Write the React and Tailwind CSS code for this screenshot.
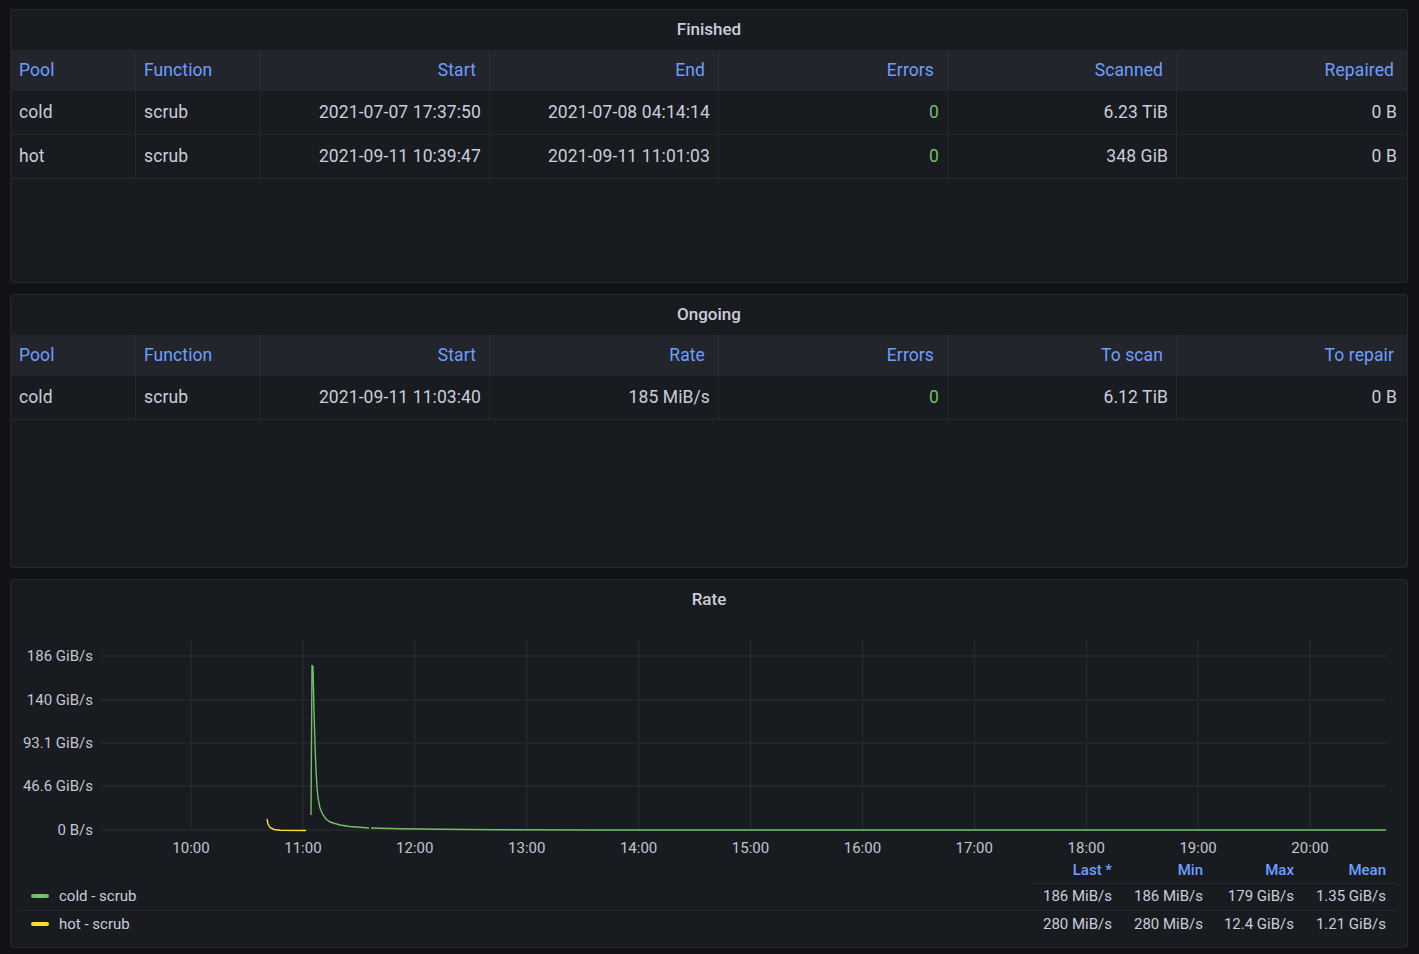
const finishedCols = [
  { label: 'Pool', w: 'w-[125px]', align: 'left' },
  { label: 'Function', w: 'w-[125px]', align: 'left' },
  { label: 'Start', w: 'w-[229px]', align: 'right' },
  { label: 'End', w: 'w-[229px]', align: 'right' },
  { label: 'Errors', w: 'w-[229px]', align: 'right' },
  { label: 'Scanned', w: 'w-[229px]', align: 'right' },
  { label: 'Repaired', w: 'w-[230px]', align: 'right' },
]

const ongoingCols = [
  { label: 'Pool', w: 'w-[125px]', align: 'left' },
  { label: 'Function', w: 'w-[125px]', align: 'left' },
  { label: 'Start', w: 'w-[229px]', align: 'right' },
  { label: 'Rate', w: 'w-[229px]', align: 'right' },
  { label: 'Errors', w: 'w-[229px]', align: 'right' },
  { label: 'To scan', w: 'w-[229px]', align: 'right' },
  { label: 'To repair', w: 'w-[230px]', align: 'right' },
]

const finishedRows = [
  ['cold', 'scrub', '2021-07-07 17:37:50', '2021-07-08 04:14:14', '0', '6.23 TiB', '0 B'],
  ['hot', 'scrub', '2021-09-11 10:39:47', '2021-09-11 11:01:03', '0', '348 GiB', '0 B'],
]

const ongoingRows = [['cold', 'scrub', '2021-09-11 11:03:40', '185 MiB/s', '0', '6.12 TiB', '0 B']]

function Panel({ title, className = '', children }) {
  return (
    <div className={`flex flex-col rounded-[3px] border border-[#25272c] bg-[#181b1f] ${className}`}>
      <div className="flex h-[40px] shrink-0 items-center justify-center text-[17px] font-medium text-[#ccccdc]">{title}</div>
      {children}
    </div>
  )
}

function Table({ cols, rows }) {
  return (
    <div className="flex flex-col">
      <div className="flex h-[41px] bg-[#22252b]">
        {cols.map((c, i) => (
          <div
            key={c.label}
            className={`${c.w} flex items-center border-[#2a2c31] text-[17.5px] tracking-[0.1px] text-[#6e9fff] ${i < cols.length - 1 ? 'border-r' : ''} ${c.align === 'right' ? 'justify-end pr-[13px]' : 'pl-2'}`}
          >
            {c.label}
          </div>
        ))}
      </div>
      {rows.map((r, ri) => (
        <div key={ri} className="flex h-[44px] border-b border-[#25272c]">
          {r.map((v, i) => (
            <div
              key={i}
              className={`${cols[i].w} flex items-center border-[#25272c] text-[17.5px] tracking-[0.1px] ${i === 4 ? 'text-[#73bf69]' : 'text-[#ccccdc]'} ${i < r.length - 1 ? 'border-r' : ''} ${cols[i].align === 'right' ? (i === r.length - 1 ? 'justify-end pr-[10px]' : 'justify-end pr-[8px]') : 'pl-2'}`}
            >
              {v}
            </div>
          ))}
        </div>
      ))}
    </div>
  )
}

const yTicks = [
  [656, '186 GiB/s'],
  [700, '140 GiB/s'],
  [743, '93.1 GiB/s'],
  [786, '46.6 GiB/s'],
  [830, '0 B/s'],
]

const xTicks = ['10:00', '11:00', '12:00', '13:00', '14:00', '15:00', '16:00', '17:00', '18:00', '19:00', '20:00']

function Chart() {
  return (
    <svg className="block shrink-0" width="1396" height="237" viewBox="11 620 1396 237">
      {yTicks.map(([y]) => (
        <line key={y} x1="100" x2="1386" y1={y} y2={y} stroke="#2c2e33" strokeWidth="1" />
      ))}
      {xTicks.map((t, i) => {
        const x = 191 + i * 111.9
        return <line key={t} x1={x} x2={x} y1="640" y2="830" stroke="#2c2e33" strokeWidth="1" />
      })}
      {yTicks.map(([y, label]) => (
        <text key={label} x="93" y={y + 5} textAnchor="end" fontSize="15" fill="#c4c4d2" fontFamily="Roboto, sans-serif">
          {label}
        </text>
      ))}
      {xTicks.map((t, i) => (
        <text key={t} x={191 + i * 111.9} y="853" textAnchor="middle" fontSize="15" fill="#c4c4d2" fontFamily="Roboto, sans-serif">
          {t}
        </text>
      ))}
      <path
        d="M267,819 L268,824 L270,827.5 L274,829.5 L280,830.2 L306,830.5"
        fill="none"
        stroke="#fade2a"
        strokeWidth="1.4"
      />
      <path
        d="M311,815 L312,665 L313,667 L314,710 L315,745 L316,770 L317,787 L318,798 L320,808 L323,815 L326,819 L330,822 L340,825 L350,826.5 L369,828 M371,828 L400,828.8 L440,829.3 L500,829.7 L600,830 L1386,830"
        fill="none"
        stroke="#73bf69"
        strokeWidth="1.4"
      />
    </svg>
  )
}

const legend = [
  { name: 'cold - scrub', color: 'bg-[#73bf69]', vals: ['186 MiB/s', '186 MiB/s', '179 GiB/s', '1.35 GiB/s'] },
  { name: 'hot - scrub', color: 'bg-[#fade2a]', vals: ['280 MiB/s', '280 MiB/s', '12.4 GiB/s', '1.21 GiB/s'] },
]

function Legend() {
  return (
    <table className="ml-[10px] mr-[10px] border-collapse text-[15px]">
      <thead>
        <tr className="h-[26px]">
          <th className="p-0" />
          {['Last *', 'Min', 'Max', 'Mean'].map((h, i) => (
            <th
              key={h}
              className={`w-[91px] border-b border-[#25272c] p-0 text-right align-middle font-medium text-[#6e9fff] ${i === 3 ? 'pr-[11px] w-[93px]' : 'pr-[10px]'}`}
            >
              {h}
            </th>
          ))}
        </tr>
      </thead>
      <tbody>
        {legend.map((s, ri) => (
          <tr key={s.name} className={`h-[27px] ${ri === 0 ? 'border-b border-[#25272c]' : ''}`}>
            <td className="p-0 pl-[10px] text-left">
              <div className="flex items-center gap-[10px] text-[#ccccdc]">
                <span className={`h-[4px] w-[18px] rounded-[2px] ${s.color}`} />
                {s.name}
              </div>
            </td>
            {s.vals.map((v, i) => (
              <td key={i} className={`p-0 text-right text-[#ccccdc] ${i === 3 ? 'pr-[11px]' : 'pr-[10px]'}`}>
                {v}
              </td>
            ))}
          </tr>
        ))}
      </tbody>
    </table>
  )
}

export default function App() {
  return (
    <div className="flex h-[954px] w-[1419px] flex-col gap-[11px] bg-[#111217] pl-[10px] pr-[11px] pt-[9px] font-['Roboto',sans-serif]">
      <Panel title="Finished" className="h-[274px]">
        <Table cols={finishedCols} rows={finishedRows} />
      </Panel>
      <Panel title="Ongoing" className="h-[274px]">
        <Table cols={ongoingCols} rows={ongoingRows} />
      </Panel>
      <Panel title="Rate" className="h-[369px]">
        <Chart />
        <Legend />
      </Panel>
    </div>
  )
}
